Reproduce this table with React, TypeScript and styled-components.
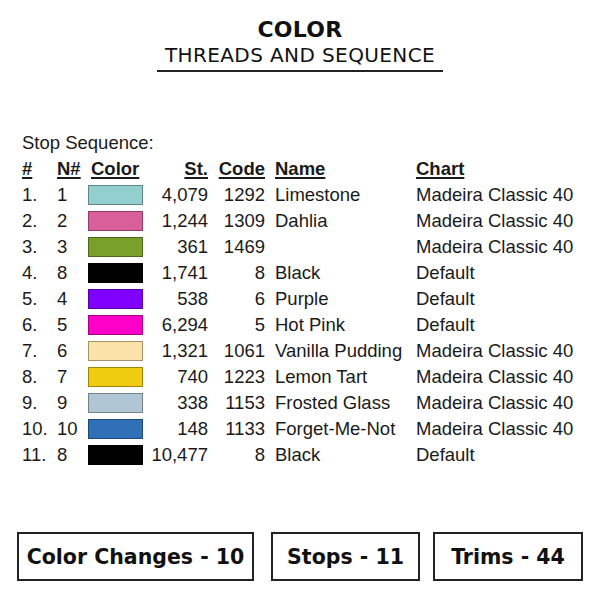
import React from "react";
import styled, { createGlobalStyle } from "styled-components";

const Global = createGlobalStyle`
  html, body { margin: 0; padding: 0; background: #fff; }
  body { width: 600px; height: 600px; overflow: hidden; }
`;

const Page = styled.div`
  width: 600px;
  height: 600px;
  box-sizing: border-box;
  background: #fff;
  color: #111;
  display: flex;
  flex-direction: column;
`;

const Header = styled.header`
  display: flex;
  flex-direction: column;
  align-items: center;
  padding-top: 19px;
`;

const Title = styled.h1`
  margin: 0;
  font-family: "DejaVu Sans", sans-serif;
  font-weight: 700;
  font-size: 22px;
  line-height: 22px;
  letter-spacing: 0.3px;
  color: #111;
`;

const Subtitle = styled.h2`
  margin: 3px 0 0;
  font-family: "DejaVu Sans", sans-serif;
  font-weight: 400;
  font-size: 20px;
  line-height: 22px;
  letter-spacing: 0.4px;
  color: #111;
  width: 286px;
  text-align: center;
  padding-bottom: 4px;
  border-bottom: 2px solid #222;
`;

const Section = styled.section`
  margin-top: 58px;
  padding-left: 22px;
  font-family: "Liberation Sans", Arial, sans-serif;
  font-size: 18.5px;
  color: #1a1a1a;
`;

const Caption = styled.div`
  height: 26px;
  line-height: 26px;
`;

const Grid = styled.div`
  display: grid;
  grid-template-columns: 35px 31px 55px 65px 57px 151px 1fr;
  grid-auto-rows: 26px;
  align-items: center;
`;

const Cell = styled.div<{ $right?: boolean; $head?: boolean; $pad?: number }>`
  text-align: ${(p) => (p.$right ? "right" : "left")};
  font-weight: ${(p) => (p.$head ? 700 : 400)};
  text-decoration: ${(p) => (p.$head ? "underline" : "none")};
  text-decoration-thickness: 2px;
  text-underline-offset: 2px;
  padding-left: ${(p) => p.$pad ?? 0}px;
  white-space: nowrap;
  line-height: 26px;
`;

const Swatch = styled.div<{ $c: string }>`
  width: 55px;
  height: 20px;
  box-sizing: border-box;
  background: ${(p) => p.$c};
  border: 1px solid rgba(0, 0, 0, 0.35);
`;

const Footer = styled.footer`
  margin-top: auto;
  margin-bottom: 19px;
  padding: 0 16px 0 17px;
  display: flex;
`;

const StatBox = styled.div<{ $w: number; $ml?: number }>`
  width: ${(p) => p.$w}px;
  margin-left: ${(p) => p.$ml ?? 0}px;
  height: 49px;
  box-sizing: border-box;
  border: 2px solid #222;
  display: flex;
  align-items: center;
  justify-content: center;
  font-family: "DejaVu Sans", sans-serif;
  font-weight: 700;
  font-size: 20.5px;
  color: #111;
  white-space: nowrap;
`;

type Row = [string, string, string, string, string, string, string];

const rows: Row[] = [
  ["1.", "1", "#93cfcf", "4,079", "1292", "Limestone", "Madeira Classic 40"],
  ["2.", "2", "#d95f9a", "1,244", "1309", "Dahlia", "Madeira Classic 40"],
  ["3.", "3", "#78a02a", "361", "1469", "", "Madeira Classic 40"],
  ["4.", "8", "#000000", "1,741", "8", "Black", "Default"],
  ["5.", "4", "#7f00ff", "538", "6", "Purple", "Default"],
  ["6.", "5", "#ff00c8", "6,294", "5", "Hot Pink", "Default"],
  ["7.", "6", "#fbe2a8", "1,321", "1061", "Vanilla Pudding", "Madeira Classic 40"],
  ["8.", "7", "#efcc10", "740", "1223", "Lemon Tart", "Madeira Classic 40"],
  ["9.", "9", "#b0c6d4", "338", "1153", "Frosted Glass", "Madeira Classic 40"],
  ["10.", "10", "#2f70b6", "148", "1133", "Forget-Me-Not", "Madeira Classic 40"],
  ["11.", "8", "#000000", "10,477", "8", "Black", "Default"],
];

export default function App() {
  return (
    <Page>
      <Global />
      <Header>
        <Title>COLOR</Title>
        <Subtitle>THREADS AND SEQUENCE</Subtitle>
      </Header>
      <Section>
        <Caption>Stop Sequence:</Caption>
        <Grid>
          <Cell $head>#</Cell>
          <Cell $head>N#</Cell>
          <Cell $head $pad={3}>Color</Cell>
          <Cell $head $right>St.</Cell>
          <Cell $head $right>Code</Cell>
          <Cell $head $pad={10}>Name</Cell>
          <Cell $head>Chart</Cell>
          {rows.map((r, i) => (
            <React.Fragment key={i}>
              <Cell>{r[0]}</Cell>
              <Cell>{r[1]}</Cell>
              <Swatch $c={r[2]} />
              <Cell $right>{r[3]}</Cell>
              <Cell $right>{r[4]}</Cell>
              <Cell $pad={10}>{r[5]}</Cell>
              <Cell>{r[6]}</Cell>
            </React.Fragment>
          ))}
        </Grid>
      </Section>
      <Footer>
        <StatBox $w={237}>Color Changes - 10</StatBox>
        <StatBox $w={149} $ml={17}>Stops - 11</StatBox>
        <StatBox $w={150} $ml={13}>Trims - 44</StatBox>
      </Footer>
    </Page>
  );
}
